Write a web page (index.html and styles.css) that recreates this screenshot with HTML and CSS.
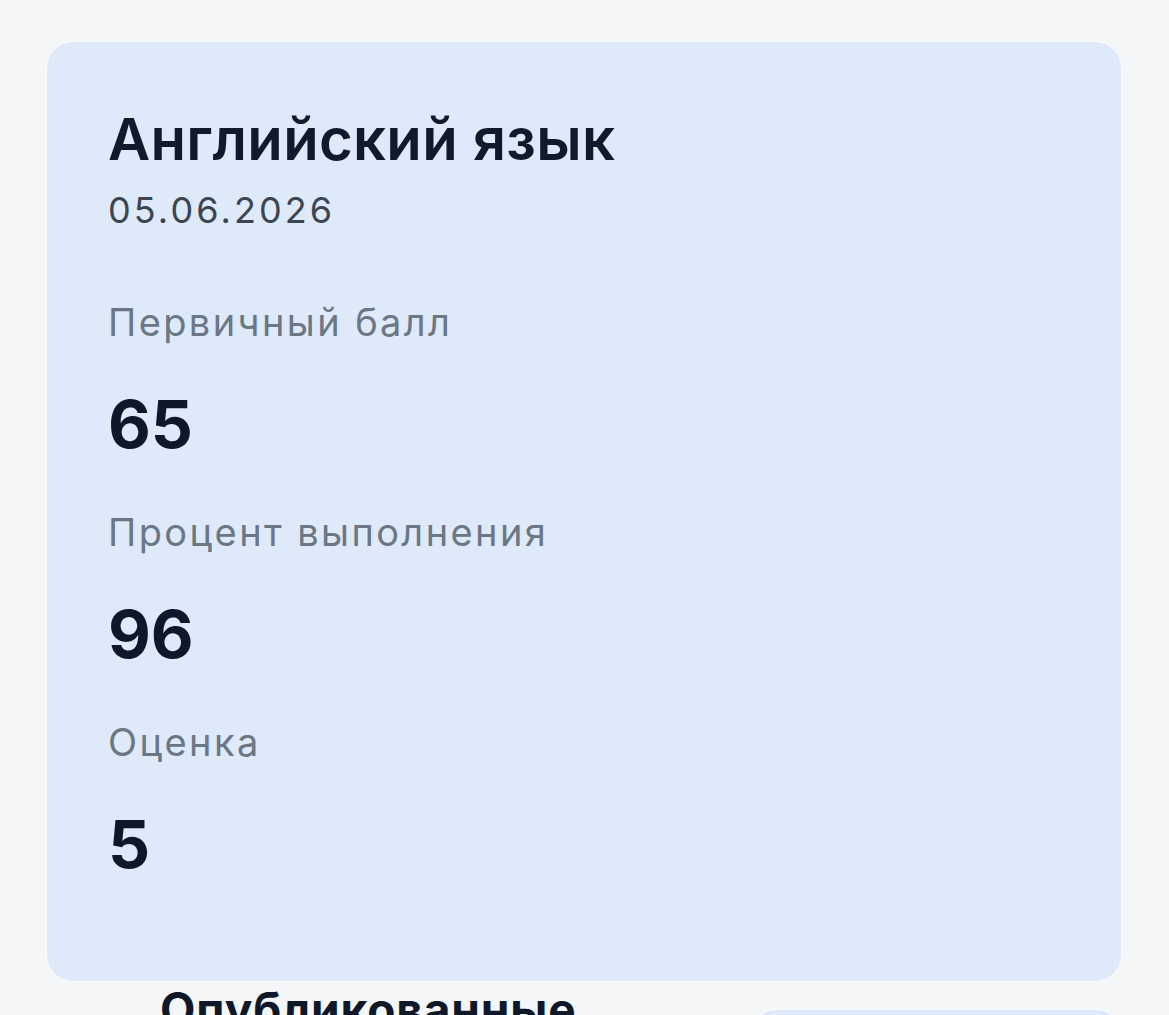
FILE: index.html
```html
<!DOCTYPE html>
<html lang="ru">
<head>
<meta charset="utf-8">
<title>Английский язык</title>
<link rel="stylesheet" href="styles.css">
</head>
<body>
<main class="page">
  <section class="card">
    <h1 class="title">Английский язык</h1>
    <div class="date">05.06.2026</div>
    <div class="stats">
      <div class="stat">
        <div class="label">Первичный балл</div>
        <div class="value">65</div>
      </div>
      <div class="stat">
        <div class="label">Процент выполнения</div>
        <div class="value">96</div>
      </div>
      <div class="stat">
        <div class="label">Оценка</div>
        <div class="value">5</div>
      </div>
    </div>
  </section>
  <section class="lower">
    <h2 class="heading">Опубликованные результаты</h2>
    <div class="mini"></div>
  </section>
</main>
</body>
</html>
```
FILE: styles.css
```css
html, body {
  margin: 0;
  padding: 0;
}
body {
  background: #f4f6f8;
  font-family: Inter, "Noto Sans", "DejaVu Sans", sans-serif;
  overflow: hidden;
  height: 1015px;
}
.page {
  padding: 42px 48px 0 47px;
}
.card {
  background: #deeafa;
  border-radius: 26px;
  padding: 62px 61px 97px;
  box-shadow: 0 0 0 1px rgba(255, 255, 255, 0.55);
}
.title {
  margin: 0;
  font-size: 58px;
  line-height: 70px;
  font-weight: 600;
  color: #101a2a;
  letter-spacing: 0.3px;
}
.date {
  margin-top: 12px;
  font-size: 36px;
  line-height: 48px;
  color: #3d4551;
  letter-spacing: 3.1px;
}
.stats {
  margin-top: 62px;
  display: flex;
  flex-direction: column;
  gap: 42px;
}
.stat {
  display: flex;
  flex-direction: column;
  gap: 36px;
}
.label {
  font-size: 38px;
  line-height: 52px;
  color: #6b7785;
  letter-spacing: 2.4px;
}
.value {
  font-size: 66px;
  line-height: 80px;
  font-weight: 700;
  color: #0f1828;
}
.lower {
  display: grid;
  grid-template-columns: 1fr 368px;
  gap: 40px;
  padding: 0 1px 0 113px;
}
.heading {
  margin: 0;
  font-size: 46px;
  line-height: 56px;
  font-weight: 700;
  color: #0f1828;
  letter-spacing: 0.9px;
}
.mini {
  margin-top: 29px;
  height: 120px;
  background: #deeafa;
  border-radius: 24px;
  box-shadow: 0 0 0 1px rgba(255, 255, 255, 0.55);
}
```
